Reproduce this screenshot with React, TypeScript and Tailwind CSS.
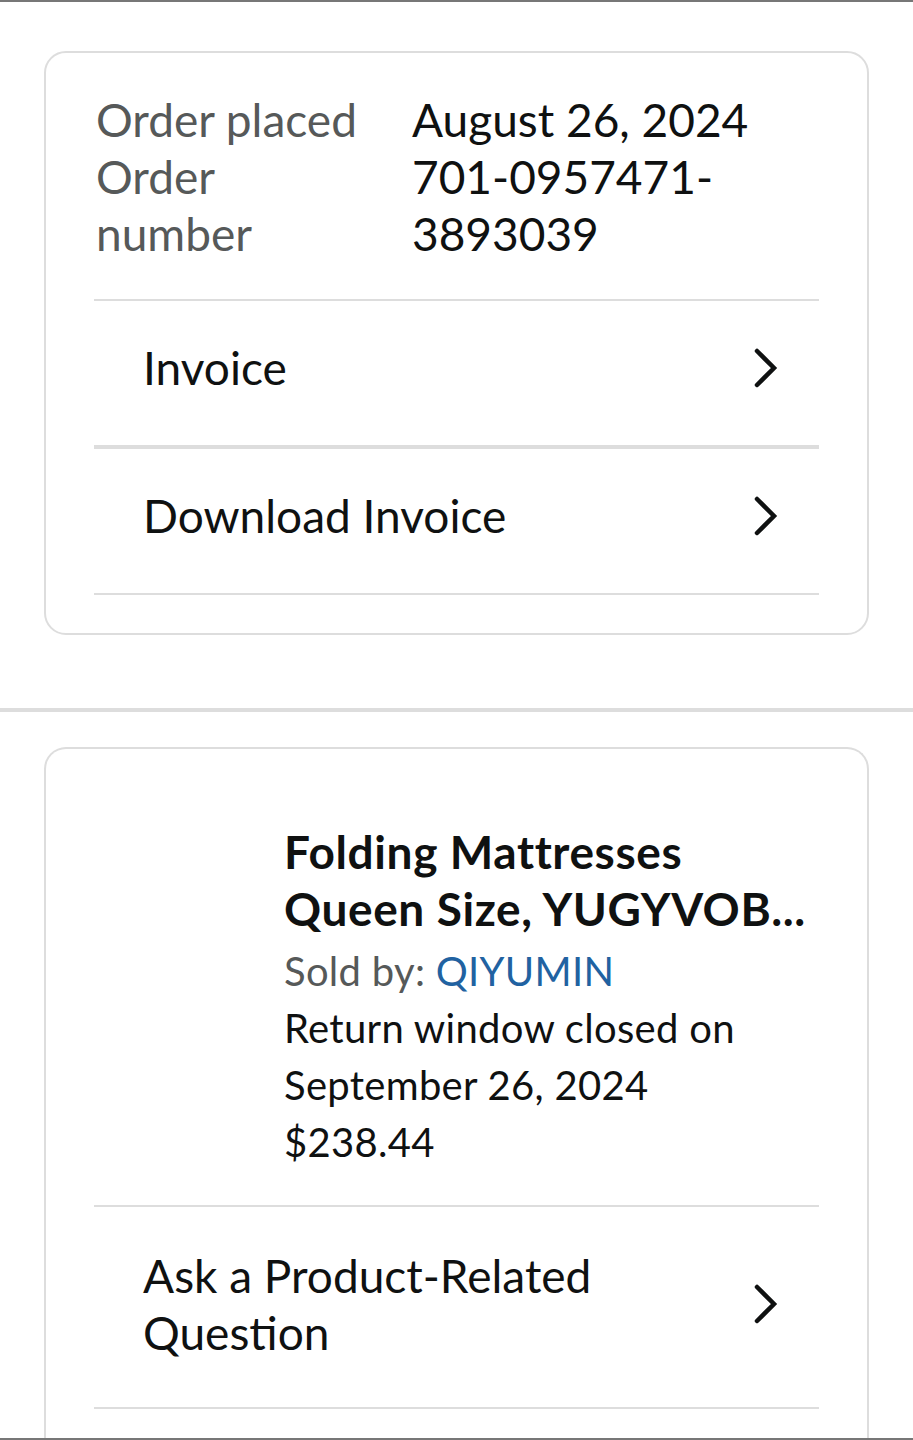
import React from "react";

function Chevron() {
  return (
    <svg width="26" height="42" viewBox="0 0 26 42" fill="none" className="shrink-0">
      <polyline points="5,4 22,21 5,38" stroke="#0f1111" strokeWidth="4.5" strokeLinecap="round" strokeLinejoin="miter" />
    </svg>
  );
}

function Row({ children }: { children: React.ReactNode }) {
  return (
    <div className="flex items-center justify-between pl-[49px] pr-[41px] pt-[38px] pb-[49px]">
      <div className="text-[#0f1111] max-w-[520px]">{children}</div>
      <Chevron />
    </div>
  );
}

export default function App() {
  return (
    <div
      className="min-h-screen bg-white border-t-2 border-[#777777] text-[46px] leading-[57px] text-[#0f1111]"
      style={{ fontFamily: "Lato, 'Noto Sans', sans-serif" }}
    >
      <div className="pt-[49px] px-[44px]">
        <div className="border-2 border-[#dddddd] rounded-[22px] px-[48px] pt-[38px] pb-[38px]">
          <div className="grid grid-cols-[270px_1fr] gap-x-[46px] pl-[2px]">
            <div className="text-[#565959]">Order placed</div>
            <div>August 26, 2024</div>
            <div className="text-[#565959]">Order number</div>
            <div>701-0957471-3893039</div>
          </div>
          <div className="mt-[37px] h-[2px] bg-[#dddddd]" />
          <Row>Invoice</Row>
          <div className="h-[4px] bg-[#dddddd]" />
          <Row>Download Invoice</Row>
          <div className="h-[2px] bg-[#dddddd]" />
        </div>
      </div>

      <div className="mt-[73px] h-[4px] bg-[#dddddd]" />

      <div className="pt-[35px] px-[44px]">
        <div className="border-2 border-b-0 border-[#dddddd] rounded-t-[22px] px-[48px] pt-[74px] pb-[40px]">
          <div className="flex gap-[30px]">
            <div className="w-[160px] shrink-0" />
            <div className="min-w-0 flex-1">
              <div className="font-bold text-[46px] tracking-[0.6px]">
                Folding Mattresses
                <br />
                Queen Size, YUGYVOB...
              </div>
              <div className="text-[40px] leading-[57px] tracking-[0.3px]">
                <div className="mt-[6px] text-[#565959]">
                  Sold by: <span className="text-[#2162a1]">QIYUMIN</span>
                </div>
                <div>Return window closed on September 26, 2024</div>
                <div>$238.44</div>
              </div>
            </div>
          </div>
          <div className="mt-[34px] h-[2px] bg-[#dddddd]" />
          <div className="flex items-center justify-between pl-[49px] pr-[41px] pt-[40px] pb-[46px]">
            <div className="max-w-[520px]">Ask a Product-Related Question</div>
            <Chevron />
          </div>
          <div className="h-[2px] bg-[#dddddd]" />
        </div>
      </div>
      <div className="fixed bottom-0 left-0 right-0 h-[2px] bg-[#777777]" />
    </div>
  );
}
